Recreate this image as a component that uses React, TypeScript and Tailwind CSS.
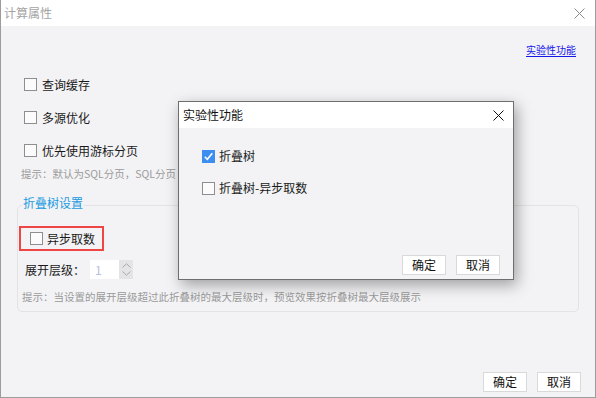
import React from 'react';

const CloseIcon: React.FC<{ color: string }> = ({ color }) => (
  <svg width="11" height="11" viewBox="0 0 11 11" fill="none">
    <path d="M0.5 0.5 L10.5 10.5 M10.5 0.5 L0.5 10.5" stroke={color} strokeWidth="1" />
  </svg>
);

const Box: React.FC<{ checked?: boolean }> = ({ checked }) =>
  checked ? (
    <span className="w-[13px] h-[13px] shrink-0 bg-[#3d8ef0] flex items-center justify-center">
      <svg width="11" height="11" viewBox="0 0 11 11" fill="none">
        <path d="M1.8 5.8 L4.3 8.3 L9.3 2.3" stroke="#ffffff" strokeWidth="1.6" />
      </svg>
    </span>
  ) : (
    <span className="w-[13px] h-[13px] shrink-0 border border-[#8e8e8e] bg-[#fbfbfb]" />
  );

const Button: React.FC<{ label: string }> = ({ label }) => (
  <button className="w-[44px] h-[20px] border border-[#d9d9d9] bg-white text-[12px] leading-[18px] text-[#111]">
    {label}
  </button>
);

export default function App() {
  return (
    <div className="relative w-[596px] h-[398px] flex flex-col border-x border-b border-[#9c9c9c] bg-[#f3f3f5] font-['Noto_Sans_CJK_SC','Microsoft_YaHei',sans-serif] text-[#1a1a1a] overflow-hidden">
      {/* main window title */}
      <div className="h-[26px] shrink-0 bg-white flex items-center justify-between pl-[3px] pr-[10px]">
        <span className="text-[12px] leading-[16px] text-[#a4a4a4]">计算属性</span>
        <CloseIcon color="#8a8a8a" />
      </div>

      <div className="flex-1 flex flex-col">
        <div className="flex justify-end pr-[19px] pt-[17px]">
          <span className="text-[10px] leading-[14px] text-[#1717e8] underline underline-offset-2">实验性功能</span>
        </div>

        <div className="mt-[11px] flex flex-col pl-[23px]">
          {['查询缓存', '多源优化', '优先使用游标分页'].map((t) => (
            <div key={t} className="h-[33px] flex items-center gap-[5px]">
              <Box />
              <span className="text-[12px] leading-[16px]">{t}</span>
            </div>
          ))}
        </div>
        {/* hint is cut off by the dialog */}
        <div className="ml-[20px] w-[156px] h-[14px] overflow-hidden text-[10.5px] leading-[14px] text-[#9a9a9a] whitespace-nowrap">
          提示：默认为SQL分页，SQL分页
        </div>

        {/* collapse tree settings */}
        <fieldset className="mx-[16px] mt-[14px] border border-[#e3e3e7] rounded-[5px] p-0 pb-[7px] min-w-0">
          <legend className="ml-[4px] px-[1px] pb-[4px] text-[12px] leading-[16px] text-[#1b9ae0]">折叠树设置</legend>
          <div className="mt-[11px] ml-[1px] w-[85px] h-[25px] border-2 border-[#ee4545] flex items-center pl-[9px] gap-[4px]">
            <Box />
            <span className="text-[12px] leading-[16px]">异步取数</span>
          </div>
          <div className="mt-[9px] h-[19px] flex items-center pl-[7px] gap-[5px]">
            <span className="text-[12px] leading-[16px]">展开层级：</span>
            <div className="flex h-[19px]">
              <div className="w-[29px] h-[19px] bg-white pl-[5px] text-[12px] leading-[19px] text-[#b8bedd]">1</div>
              <div className="w-[14px] h-[19px] bg-[#e4e4e7] flex flex-col items-center justify-center gap-[3px]">
                <svg width="9" height="5" viewBox="0 0 9 5" fill="none">
                  <path d="M0.5 4.5 L4.5 0.8 L8.5 4.5" stroke="#a9a9ad" strokeWidth="1" />
                </svg>
                <svg width="9" height="5" viewBox="0 0 9 5" fill="none">
                  <path d="M0.5 0.5 L4.5 4.2 L8.5 0.5" stroke="#a9a9ad" strokeWidth="1" />
                </svg>
              </div>
            </div>
          </div>
          <div className="mt-[11px] pl-[4px] text-[10.5px] leading-[14px] text-[#9a9a9a] whitespace-nowrap">
            提示：当设置的展开层级超过此折叠树的最大层级时，预览效果按折叠树最大层级展示
          </div>
        </fieldset>

        <div className="mt-auto flex justify-end gap-[10px] pr-[14px] pb-[5px]">
          <Button label="确定" />
          <Button label="取消" />
        </div>
      </div>

      {/* experimental features dialog */}
      <div className="absolute left-[177px] top-[101px] w-[336px] h-[179px] flex flex-col border border-[#6e6e6e] bg-[#f3f3f5] shadow-[3px_5px_14px_rgba(0,0,0,0.35)]">
        <div className="h-[26px] shrink-0 bg-white flex items-center justify-between pl-[4px] pr-[9px]">
          <span className="text-[12px] leading-[16px] text-[#111]">实验性功能</span>
          <CloseIcon color="#111111" />
        </div>
        <div className="mt-[12px] flex flex-col pl-[23px]">
          <div className="h-[32px] flex items-center gap-[4px]">
            <Box checked />
            <span className="text-[12px] leading-[16px]">折叠树</span>
          </div>
          <div className="h-[32px] flex items-center gap-[4px]">
            <Box />
            <span className="text-[12px] leading-[16px]">折叠树-异步取数</span>
          </div>
        </div>
        <div className="mt-auto flex justify-end gap-[10px] pr-[13px] pb-[4px]">
          <Button label="确定" />
          <Button label="取消" />
        </div>
      </div>
    </div>
  );
}
